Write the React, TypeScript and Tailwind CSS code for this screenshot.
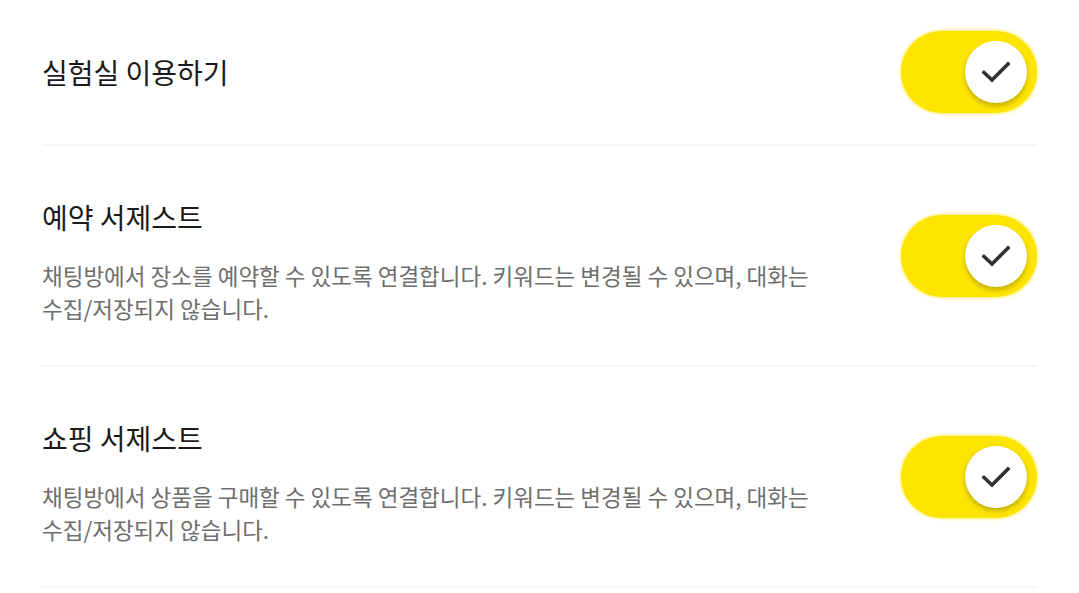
const items = [
  { title: "실험실 이용하기", desc: null },
  {
    title: "예약 서제스트",
    desc: "채팅방에서 장소를 예약할 수 있도록 연결합니다. 키워드는 변경될 수 있으며, 대화는 수집/저장되지 않습니다.",
  },
  {
    title: "쇼핑 서제스트",
    desc: "채팅방에서 상품을 구매할 수 있도록 연결합니다. 키워드는 변경될 수 있으며, 대화는 수집/저장되지 않습니다.",
  },
]

function Toggle() {
  return (
    <div className="flex h-[82px] w-[136px] shrink-0 items-center justify-end rounded-full bg-[#fee500] pr-[10px] shadow-[0_0_3px_1px_rgba(254,229,0,0.6)]">
      <div className="flex h-[62px] w-[62px] items-center justify-center rounded-full bg-white shadow-[0_3px_5px_rgba(0,0,0,0.25)]">
        <svg width="30" height="22" viewBox="0 0 30 22" fill="none">
          <path d="M3 11.5L11 19L27 3" stroke="#333" strokeWidth="3.6" strokeLinecap="square" strokeLinejoin="miter" />
        </svg>
      </div>
    </div>
  )
}

export default function App() {
  return (
    <div className="min-h-screen bg-white font-['Noto_Sans_CJK_KR','Noto_Sans',sans-serif]">
      <div className="mx-[42px]">
        {items.map((item, i) => (
          <div
            key={item.title}
            className={
              i === 0
                ? "flex items-center justify-between border-b-2 border-[#f6f6f6] py-[31px]"
                : "flex items-center justify-between border-b-2 border-[#f6f6f6]"
            }
          >
            <div className={item.desc ? "flex flex-col pt-[53px] pb-[40px]" : "flex flex-col"}>
              <div className="text-[28px] leading-[36px] text-[#1a1a1a]">{item.title}</div>
              {item.desc ? (
                <p className="mt-[24px] w-[790px] text-[22.5px] leading-[33px] text-[#6e6e6e]">{item.desc}</p>
              ) : null}
            </div>
            <Toggle />
          </div>
        ))}
      </div>
    </div>
  )
}
